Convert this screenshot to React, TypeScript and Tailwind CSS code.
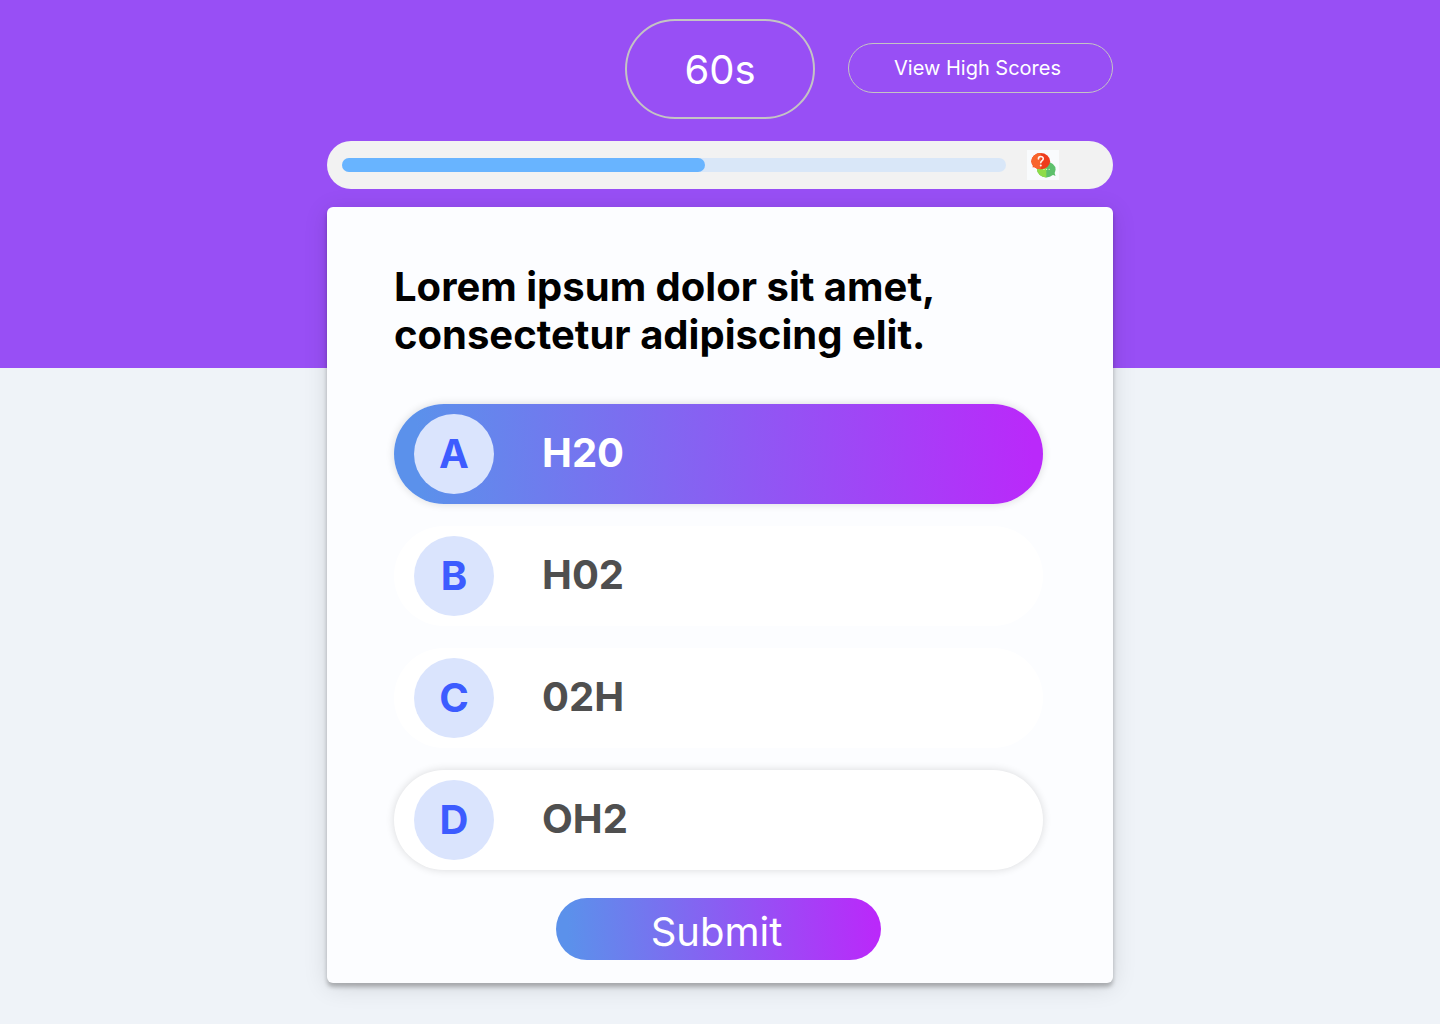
import { useState } from "react";

const answers = [
  { letter: "A", text: "H20", raised: true },
  { letter: "B", text: "H02", raised: false },
  { letter: "C", text: "02H", raised: false },
  { letter: "D", text: "OH2", raised: true },
];

const gradient = "bg-[linear-gradient(87deg,#5b91eb_4%,#ba29fa_98%)]";

function QuizIcon() {
  return (
    <svg className="h-[30px] w-8 shrink-0" viewBox="0 0 32 30" aria-hidden="true">
      <rect width="32" height="30" fill="#f9fbfd" />
      <ellipse cx="19.3" cy="19.6" rx="9.3" ry="7.8" fill="#5dc06c" />
      <path d="M25 24.5 28.5 26 27 21z" fill="#5dc06c" />
      <path d="M19.3 11.8a9.3 7.8 0 0 0 0 15.6z" fill="#8fdc48" />
      <path d="M6 13 5.6 17.6 11 16.2z" fill="#f8652c" />
      <ellipse cx="13.7" cy="11.2" rx="9.4" ry="8.1" fill="#ee3c1c" />
      <path d="M13.7 3.1a9.4 8.1 0 0 0 0 16.2z" fill="#f8652c" />
      <path
        d="M11.4 8.9c0-3.2 4.9-3.1 4.9-.2 0 1.9-2.5 1.9-2.5 4.1"
        fill="none"
        stroke="#fff3ee"
        strokeWidth="1.6"
        strokeLinecap="round"
      />
      <circle cx="13.8" cy="15.4" r="1" fill="#fff3ee" />
      <circle cx="17" cy="19.4" r="0.6" fill="#d9f7c9" />
      <circle cx="19.6" cy="19.4" r="0.6" fill="#d9f7c9" />
      <circle cx="22.2" cy="19.4" r="0.6" fill="#d9f7c9" />
    </svg>
  );
}

export default function App() {
  const [selected, setSelected] = useState("A");
  const progress = 54.7;

  return (
    <div className="min-h-screen bg-[#eff3f8] font-['Inter',sans-serif]">
      <header className="bg-[#984ff5] pt-[19px] pb-[179px]">
        <div className="mx-auto max-w-[786px]">
          <div className="grid grid-cols-[1fr_190px_1fr] items-start">
            <div className="col-start-2 flex h-[100px] items-center justify-center rounded-full border-2 border-[#c4c4c4] pt-0.5 text-[40px] text-white">
              60s
            </div>
            <button
              type="button"
              className="mt-6 h-[50px] w-[265px] justify-self-end rounded-full border border-[#c4c4c4] pr-1.5 text-xl text-white"
            >
              View High Scores
            </button>
          </div>
          <div className="mt-[22px] flex h-12 items-center gap-[21px] rounded-full bg-[#f2f2f2] pr-[54px] pl-[15px]">
            <div
              role="progressbar"
              aria-label="Quiz progress"
              aria-valuenow={progress}
              aria-valuemin={0}
              aria-valuemax={100}
              className="h-3.5 flex-1 rounded-full bg-[#d9e7f8]"
            >
              <div className="h-full rounded-full bg-[#68b4ff]" style={{ width: `${progress}%` }} />
            </div>
            <QuizIcon />
          </div>
        </div>
      </header>

      <main className="mx-auto -mt-[161px] max-w-[786px] pb-[41px]">
        <form
          onSubmit={(event) => event.preventDefault()}
          className="rounded-md bg-[#fcfdff] pt-14 pr-[70px] pb-[23px] pl-[67px] shadow-[0_4px_4px_rgba(0,0,0,0.25),0_4px_25px_rgba(0,0,0,0.12)]"
        >
          <h1 id="question" className="text-[40px] leading-[48px] font-bold text-black">
            Lorem ipsum dolor sit amet, consectetur adipiscing elit.
          </h1>
          <div role="radiogroup" aria-labelledby="question" className="mt-[45px] flex flex-col gap-[22px]">
            {answers.map(({ letter, text, raised }) => {
              const active = selected === letter;
              return (
                <label
                  key={letter}
                  className={`relative flex h-[100px] cursor-pointer items-center rounded-full pl-5 text-[40px] font-bold ${
                    active ? `${gradient} text-white` : "bg-white text-[#4f4f4f]"
                  } ${raised ? "shadow-[0_0_8px_rgba(0,0,0,0.14)]" : ""}`}
                >
                  <input
                    type="radio"
                    name="answer"
                    value={letter}
                    checked={active}
                    onChange={() => setSelected(letter)}
                    className="sr-only"
                  />
                  <span className="flex size-20 items-center justify-center rounded-full bg-[#dae4fd] text-[#3d5cff]">
                    {letter}
                  </span>
                  <span className="ml-12 pb-0.5">{text}</span>
                </label>
              );
            })}
          </div>
          <button
            type="submit"
            className={`mx-auto mt-7 block h-[62px] w-[325px] rounded-full pt-1 pr-1 text-[40px] font-normal text-white ${gradient}`}
          >
            Submit
          </button>
        </form>
      </main>
    </div>
  );
}
